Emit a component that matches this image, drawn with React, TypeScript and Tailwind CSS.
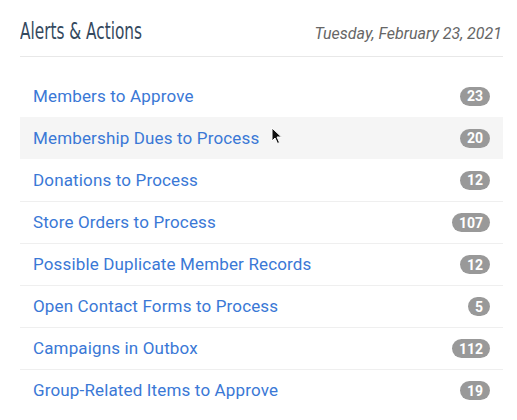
import React from 'react';

interface AlertItem {
  label: string;
  count: number;
}

const items: AlertItem[] = [
  { label: 'Members to Approve', count: 23 },
  { label: 'Membership Dues to Process', count: 20 },
  { label: 'Donations to Process', count: 12 },
  { label: 'Store Orders to Process', count: 107 },
  { label: 'Possible Duplicate Member Records', count: 12 },
  { label: 'Open Contact Forms to Process', count: 5 },
  { label: 'Campaigns in Outbox', count: 112 },
  { label: 'Group-Related Items to Approve', count: 19 },
];

const Cursor = () => (
  <svg className="absolute left-[251px] top-[10px] w-[12px] h-[18px]" viewBox="0 0 12 18">
    <path d="M1 1 L1 14 L4 11 L6.5 16.5 L8.5 15.5 L6 10 L10.5 10 Z" fill="#111" stroke="#fff" strokeWidth="1" strokeLinejoin="round" />
  </svg>
);

export default function App() {
  return (
    <div className="w-[517px] h-[420px] bg-white pl-[20px] pr-[14px] pt-[15px] overflow-hidden" style={{ fontFamily: 'Roboto, sans-serif' }}>
      {/* Header */}
      <div className="flex items-end justify-between h-[42px] border-b border-[#e8e8e8] pb-[13px] pr-[1px]">
        <h2
          className="text-[23px] leading-none text-[#34495e] origin-left scale-x-[0.74] whitespace-nowrap"
          style={{ fontFamily: '"DejaVu Sans Condensed", "DejaVu Sans", sans-serif', fontStretch: 'condensed' }}
        >
          Alerts &amp; Actions
        </h2>
        <span className="text-[16px] italic leading-none text-[#666] pb-[1px]">Tuesday, February 23, 2021</span>
      </div>

      {/* Rows */}
      <div className="mt-[18px]">
        {items.map((item, i) => (
          <div
            key={item.label}
            className={`relative flex items-center justify-between h-[42px] pl-[13px] pr-[13px] ${
              i === 1 ? 'bg-[#f5f5f5]' : ''
            } ${i >= 3 ? 'border-t border-[#efefef]' : ''}`}
          >
            <a className="text-[17px] tracking-[0.15px] text-[#3a78d6] leading-none cursor-pointer">{item.label}</a>
            <span className="inline-flex items-center justify-center h-[19px] min-w-[20px] px-[7px] rounded-full bg-[#999] text-white text-[14px] font-bold leading-none">
              {item.count}
            </span>
            {i === 1 && <Cursor />}
          </div>
        ))}
      </div>
    </div>
  );
}
